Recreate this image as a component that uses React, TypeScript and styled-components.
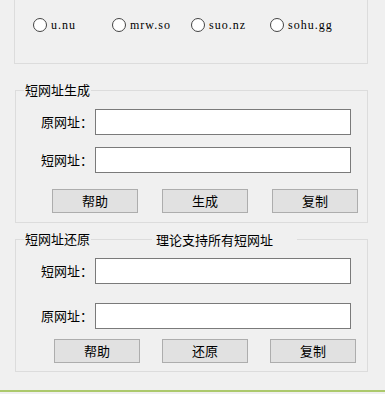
import React from "react";
import styled, { createGlobalStyle } from "styled-components";

const Global = createGlobalStyle`
  html, body { margin: 0; padding: 0; background: #f0f0f0; }
  body { font-family: "Noto Sans CJK SC", "Noto Sans", sans-serif; }
  * { box-sizing: border-box; }
`;

const Page = styled.div`
  width: 385px;
  height: 394px;
  overflow: hidden;
  background: #f0f0f0;
  display: flex;
  flex-direction: column;
`;

const TopBox = styled.div`
  margin-left: 14px;
  width: 354px;
  height: 64px;
  border: 1px solid #dcdcdc;
  border-top: none;
  display: flex;
  align-items: flex-start;
  padding-top: 18px;
  padding-left: 18px;
`;

const RadioItem = styled.label`
  width: 79px;
  display: flex;
  align-items: center;
  gap: 4px;
  font-family: "Liberation Serif", serif;
  font-size: 12px;
  letter-spacing: 1px;
  color: #000;
  height: 14px;
`;

const RadioCircle = styled.span`
  width: 14px;
  height: 14px;
  border-radius: 50%;
  border: 1px solid #444;
  background: #fff;
  flex: none;
`;

const Group = styled.div<{ $mt: number; $pt: number; $pb: number }>`
  position: relative;
  margin-left: 15px;
  margin-top: ${(p) => p.$mt}px;
  width: 353px;
  height: 133px;
  border: 1px solid #dcdcdc;
  padding: ${(p) => p.$pt}px 0 ${(p) => p.$pb}px 0;
  display: flex;
  flex-direction: column;
`;

const Legend = styled.div`
  position: absolute;
  top: -9px;
  left: 8px;
  padding: 0 1px;
  background: #f0f0f0;
  font-size: 13px;
  line-height: 16px;
  color: #000;
`;

const Note = styled.div`
  position: absolute;
  top: -8px;
  left: 136px;
  width: 145px;
  padding-left: 4px;
  background: #f0f0f0;
  font-size: 13px;
  line-height: 16px;
  color: #000;
`;

const Row = styled.div<{ $mt: number }>`
  display: flex;
  align-items: center;
  margin-top: ${(p) => p.$mt}px;
  height: 26px;
`;

const Label = styled.span`
  margin-left: 25px;
  width: 52px;
  font-size: 13px;
  line-height: 16px;
  color: #000;
  white-space: nowrap;
`;

const Input = styled.input`
  margin-left: 2px;
  width: 256px;
  height: 26px;
  border: 1px solid #7a7a7a;
  background: #fff;
  padding: 0 4px;
  outline: none;
  font-size: 13px;
`;

const ButtonRow = styled.div<{ $mt: number; $pl: number; $gap: number }>`
  display: flex;
  margin-top: ${(p) => p.$mt}px;
  padding-left: ${(p) => p.$pl}px;
  gap: ${(p) => p.$gap}px;
`;

const Button = styled.button`
  width: 86px;
  height: 24px;
  border: 1px solid #adadad;
  background: #e1e1e1;
  font-family: "Noto Sans CJK SC", "Noto Sans", sans-serif;
  font-size: 13px;
  line-height: 16px;
  color: #000;
  padding: 0;
  display: flex;
  align-items: center;
  justify-content: center;
`;

const GreenLine = styled.div`
  margin-top: 18px;
  height: 2px;
  background: #acc96c;
`;

const radios = ["u.nu", "mrw.so", "suo.nz", "sohu.gg"];

export default function App() {
  return (
    <>
      <Global />
      <Page>
        <TopBox>
          {radios.map((r) => (
            <RadioItem key={r}>
              <RadioCircle />
              {r}
            </RadioItem>
          ))}
        </TopBox>

        <Group $mt={26} $pt={18} $pb={9}>
          <Legend>短网址生成</Legend>
          <Row $mt={0}>
            <Label>原网址：</Label>
            <Input />
          </Row>
          <Row $mt={12}>
            <Label>短网址：</Label>
            <Input />
          </Row>
          <ButtonRow $mt={16} $pl={36} $gap={24}>
            <Button>帮助</Button>
            <Button>生成</Button>
            <Button>复制</Button>
          </ButtonRow>
        </Group>

        <Group $mt={16} $pt={18} $pb={8}>
          <Legend>短网址还原</Legend>
          <Note>理论支持所有短网址</Note>
          <Row $mt={0}>
            <Label>短网址：</Label>
            <Input />
          </Row>
          <Row $mt={19}>
            <Label>原网址：</Label>
            <Input />
          </Row>
          <ButtonRow $mt={10} $pl={38} $gap={22}>
            <Button>帮助</Button>
            <Button>还原</Button>
            <Button>复制</Button>
          </ButtonRow>
        </Group>

        <GreenLine />
      </Page>
    </>
  );
}
